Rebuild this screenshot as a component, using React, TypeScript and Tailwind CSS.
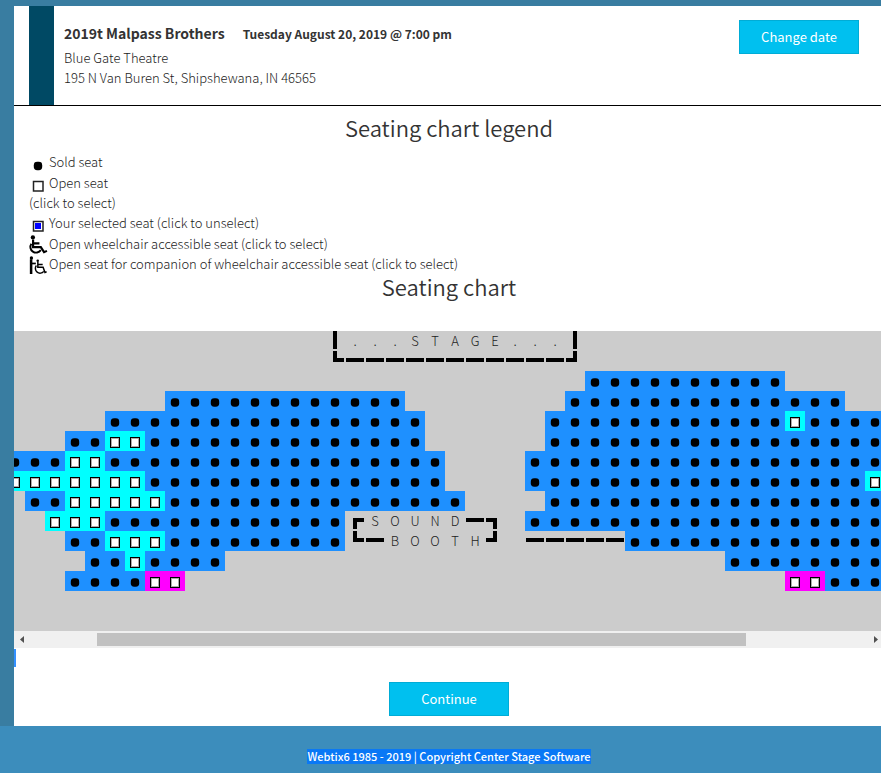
import { ReactNode } from 'react';

// One character per 20px cell:
//   * sold seat, o open seat, m open seat in the magenta section,
//   | ─ └ ┘ ┌ ┐ wall pieces, any other character is a printed label.
const CHART = [
  '                |...STAGE...|               ',
  '                └───────────┘               ',
  '                             **********     ',
  '        ************        **************  ',
  '     ****************      ************o****',
  '   **oo**************      *****************',
  '***oo*****************    ******************',
  'ooooooo***************    *****************o',
  ' **ooooo***************    *****************',
  '  ooo************┌SOUND─┐ ******************',
  '   **ooo*********└─BOOTH┘ ─────*************',
  '    **o****                         ********',
  '   ****mm                              mm***',
  '',
  '',
];

const WALLS: Record<string, string> = {
  '|': 'M8 0h4v18h-4z',
  '─': 'M1 7h18v4h-18z',
  '└': 'M8 0h4v7h7v4h-11z',
  '┘': 'M8 0h4v11h-11v-4h7z',
  '┌': 'M8 7h11v4h-7v7h-4z',
  '┐': 'M1 7h11v11h-4v-7h-7z',
};

function SeatDot() {
  return (
    <svg className="block" width="20" height="20" viewBox="0 0 20 20" aria-hidden="true">
      <rect x="5.8" y="7.3" width="8.4" height="8.4" rx="3.4" />
    </svg>
  );
}

function Cell({ kind, row, col }: { kind: string; row: number; col: number }) {
  if (kind === '*') {
    return (
      <div className="size-5 shrink-0 bg-[#1e90ff]">
        <SeatDot />
      </div>
    );
  }
  if (kind === 'o' || kind === 'm') {
    return (
      <label
        className={`flex size-5 shrink-0 justify-center pt-1.5 ${kind === 'o' ? 'bg-[#00ffff]' : 'bg-[#ff00ff]'}`}
      >
        <input
          type="checkbox"
          aria-label={`Open seat, row ${row + 1}, seat ${col + 1}`}
          className="h-[11px] w-2.5 appearance-none border border-black bg-white inset-ring inset-ring-[#aaa] checked:bg-[#0000ff]"
        />
      </label>
    );
  }
  if (WALLS[kind]) {
    return (
      <svg className="size-5 shrink-0" viewBox="0 0 20 20" aria-hidden="true" shapeRendering="crispEdges">
        <path d={WALLS[kind]} />
      </svg>
    );
  }
  return <div className="size-5 shrink-0 text-center">{kind}</div>;
}

function LegendRow({ icon, children }: { icon?: ReactNode; children: ReactNode }) {
  return (
    <li className="flex h-5 items-start">
      {icon && <span className="h-5 w-5 shrink-0">{icon}</span>}
      {children}
    </li>
  );
}

function OpenIcon({ selected = false }: { selected?: boolean }) {
  return (
    <svg className="block" width="20" height="20" viewBox="0 0 20 20" aria-hidden="true">
      <rect x="4.5" y="8.5" width="9.500" height="9.500" fill="#fff" stroke="#222" strokeWidth="1.5" />
      {selected && <rect x="6" y="10" width="6" height="6" fill="#0000ff" />}
    </svg>
  );
}

function WheelchairIcon() {
  return (
    <svg className="block overflow-visible" width="20" height="20" viewBox="0.8 0.8 18.6 18.6" fill="none" stroke="#000" strokeWidth="2" aria-hidden="true">
      <circle cx="4.4" cy="4" r="2" fill="#000" stroke="none" />
      <path d="M4.600 6v7h7.200l3 4.700 2.700-1.200M5 9.500h5.500" />
      <path d="M3 9.800a5.200 5.200 0 1 0 8.800 6" strokeWidth="1.800" />
    </svg>
  );
}

function CompanionIcon() {
  return (
    <svg className="block overflow-visible" width="20" height="20" viewBox="0.5 0.5 19 19" fill="none" stroke="#000" aria-hidden="true">
      <circle cx="2.800" cy="4.300" r="1.600" fill="#000" stroke="none" />
      <path d="M2.500 5.500v14" strokeWidth="2.400" />
      <path d="M3 9.500h4" strokeWidth="1.600" />
      <circle cx="8.800" cy="7" r="1.200" fill="#000" stroke="none" />
      <path d="M8.900 8v5h5l1.800 5 1.500-.6M9 10.500h4.500" strokeWidth="1.400" />
      <path d="M7.500 11.500a4.200 4.200 0 1 0 7 5.500" strokeWidth="1.400" />
    </svg>
  );
}

function ActionButton({ children }: { children: ReactNode }) {
  return (
    <button
      type="button"
      className="h-[34px] w-[120px] border border-[#00acd6] bg-[#00c0ef] text-[13px] font-normal text-white"
    >
      {children}
    </button>
  );
}

export default function App() {
  return (
    <div className="min-h-screen overflow-hidden bg-[#3c8dbc] font-['Noto_Sans_CJK_SC','Noto_Sans',sans-serif] text-[13px] leading-5 font-light text-[#1c1c1c]">
      <div className="bg-[#397da1] pt-1.5 pl-3.5">
        <main className="-mr-[3px] bg-white pb-2.5">
          <header className="flex border-b border-black pr-[25px] pl-[15px]">
            <div className="w-[25px] bg-[#004964]" />
            <div className="flex-1 pt-[15px] pb-[17px] pl-2.5">
              <div className="flex items-baseline gap-[18px] pb-[3px] font-bold text-[#333]">
                <h1 className="text-[14px] leading-6">2019t Malpass Brothers</h1>
                <span className="text-[12px]">Tuesday August 20, 2019 @ 7:00 pm</span>
              </div>
              <p>Blue Gate Theatre</p>
              <p>195 N Van Buren St, Shipshewana, IN 46565</p>
            </div>
            <div className="pt-3.5">
              <ActionButton>Change date</ActionButton>
            </div>
          </header>

          <section className="px-[15px] pt-[9px]">
            <h2 className="text-center text-[22px] leading-6 font-[350] text-[#333]">Seating chart legend</h2>
            <div className="flex flex-col gap-px pt-[13px]">
              <ul>
                <LegendRow
                  icon={
                    <svg className="block" width="20" height="20" viewBox="0 0 20 20" aria-hidden="true">
                      <rect x="4.800" y="9.800" width="8.400" height="8.400" rx="3.400" />
                    </svg>
                  }
                >
                  Sold seat
                </LegendRow>
              </ul>
              <ul>
                <LegendRow icon={<OpenIcon />}>Open seat</LegendRow>
                <LegendRow>(click to select)</LegendRow>
                <LegendRow icon={<OpenIcon selected />}>Your selected seat (click to unselect)</LegendRow>
              </ul>
              <ul>
                <LegendRow icon={<WheelchairIcon />}>Open wheelchair accessible seat (click to select)</LegendRow>
                <LegendRow icon={<CompanionIcon />}>
                  Open seat for companion of wheelchair accessible seat (click to select)
                </LegendRow>
              </ul>
            </div>
            <h2 className="pb-[33px] text-center text-[22px] leading-6 font-[350] text-[#333]">Seating chart</h2>
          </section>

          <section aria-label="Seating chart">
            <div className="overflow-hidden bg-[#ccc]">
              <div className="-ml-[9px]">
                {CHART.map((line, row) => (
                  <div key={row} className="flex h-5">
                    {[...line].map((kind, col) => (
                      <Cell key={col} kind={kind} row={row} col={col} />
                    ))}
                  </div>
                ))}
              </div>
            </div>
            <div className="flex h-[17px] items-center bg-[#f0f0f0] px-1.5">
              <svg width="4" height="7" viewBox="0 0 4 7" fill="#505050" aria-hidden="true">
                <path d="M4 0v7L0 3.500z" />
              </svg>
              <div className="flex flex-1 pr-[128px] pl-[73px]">
                <div className="h-[13px] flex-1 bg-[#c1c1c1]" />
              </div>
              <svg width="4" height="7" viewBox="0 0 4 7" fill="#505050" aria-hidden="true">
                <path d="M0 0v7L4 3.500z" />
              </svg>
            </div>
          </section>

          <div className="mt-px h-[18px] w-0.5 bg-[#3390ff]" />
          <div className="pt-[15px] text-center">
            <ActionButton>Continue</ActionButton>
          </div>
        </main>
      </div>
      <footer className="-mr-[3px] flex justify-center pt-[23px] pb-2 pl-3.5">
        <span className="bg-[#0a78f5] text-[11px] leading-[15px] font-medium text-white">
          Webtix6 1985 - 2019 | Copyright Center Stage Software
        </span>
      </footer>
    </div>
  );
}
